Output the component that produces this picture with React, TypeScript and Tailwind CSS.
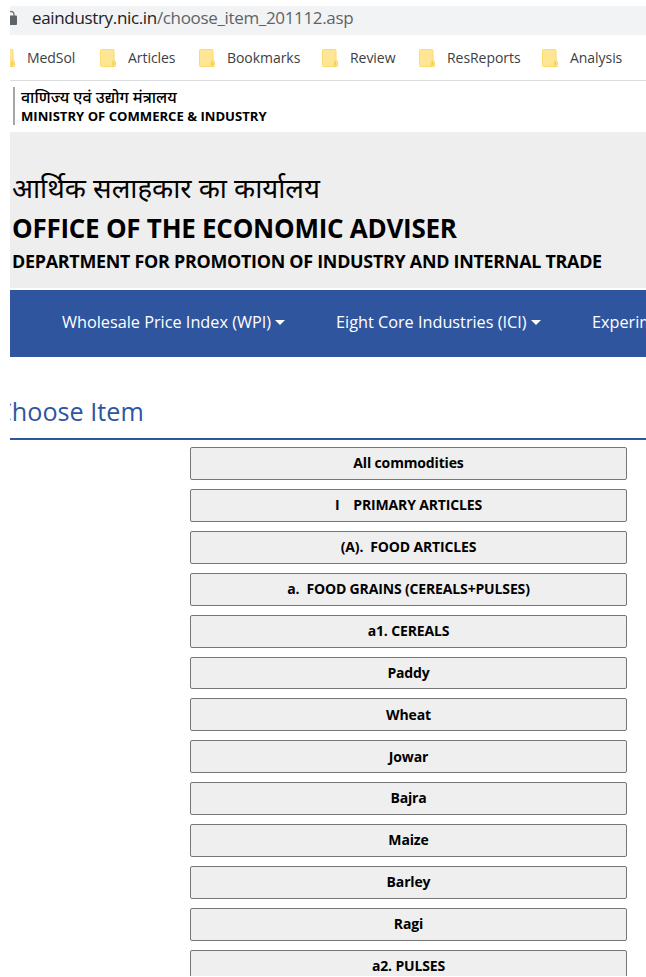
import type { ReactNode } from "react";

const bookmarks = [
  { label: "MedSol", width: "w-[101px]" },
  { label: "Articles", width: "w-[99px]" },
  { label: "Bookmarks", width: "w-[123px]" },
  { label: "Review", width: "w-[97px]" },
  { label: "ResReports", width: "w-[123px]" },
  { label: "Analysis", width: "w-[100px]" },
];

const items = [
  "All commodities",
  "I    PRIMARY ARTICLES",
  "(A).  FOOD ARTICLES",
  "a.  FOOD GRAINS (CEREALS+PULSES)",
  "a1. CEREALS",
  "Paddy",
  "Wheat",
  "Jowar",
  "Bajra",
  "Maize",
  "Barley",
  "Ragi",
  "a2. PULSES",
];

function LockIcon() {
  return (
    <svg className="h-4 w-3 shrink-0" viewBox="0 0 12 16">
      <path d="M3 6V4.5a3 3 0 0 1 6 0V6" fill="none" stroke="#77797d" strokeWidth="1.3" />
      <rect x="0" y="5.5" width="12" height="9.5" rx="1" fill="#5f6368" />
    </svg>
  );
}

function FolderIcon() {
  return (
    <svg className="h-[18px] w-4 shrink-0" viewBox="0 0 16 18">
      <rect x="0.5" y="0.5" width="13.5" height="17" rx="1" fill="#ffe694" stroke="#fbdb6b" />
      <path d="M12.2 17.5v-4.2a1.6 1.6 0 0 1 3.2 0v3.2q0 1-1 1z" fill="#ffe694" stroke="#f8d355" />
      <path d="M13.5 13v3" stroke="#f0c850" />
    </svg>
  );
}

function NavLink({ children, className }: { children: ReactNode; className: string }) {
  return (
    <a className={`flex shrink-0 items-center whitespace-nowrap ${className}`}>
      {children}
      <span className="ml-1 border-x-[5px] border-t-[5px] border-x-transparent border-t-white" />
    </a>
  );
}

export default function App() {
  return (
    <div className="h-[977px] overflow-hidden bg-white pt-[6px] pl-[10px] font-['Open_Sans','Noto_Sans',sans-serif] text-black">
      <div className="h-[970px] overflow-hidden">
        <div className="flex h-[29px] items-center bg-[#f1f3f4] pb-[5px]">
          <div className="-ml-[5px] flex items-center">
            <LockIcon />
            <p className="ml-[15px] text-[17px] leading-6 tracking-[-0.34px] whitespace-nowrap text-[#5f6368]">
              <span className="text-[#202124]">eaindustry.nic.in</span>/choose_item_201112.asp
            </p>
          </div>
        </div>

        <div className="h-[46px] border-b border-[#dadce0]">
          <div className="-ml-[11px] flex h-[45px] items-center">
            {bookmarks.map((bookmark) => (
              <div key={bookmark.label} className={`flex shrink-0 items-center gap-3 ${bookmark.width}`}>
                <FolderIcon />
                <span className="pb-px text-[14px] tracking-[-0.05px] whitespace-nowrap text-[#3c4043]">
                  {bookmark.label}
                </span>
              </div>
            ))}
          </div>
        </div>

        <header>
          <div className="h-[51px] pt-[6px] pl-[3px]">
            <div className="h-[38px] border-l-2 border-[#a6a6a6] pl-[6px] whitespace-nowrap">
              <p className="text-[16px] leading-[21px] font-medium">वाणिज्य एवं उद्योग मंत्रालय</p>
              <p className="text-[13.1px] leading-4 font-bold">MINISTRY OF COMMERCE &amp; INDUSTRY</p>
            </div>
          </div>
          <div className="h-[156px] bg-[#eeeeee] pt-[36px] pl-[2px] whitespace-nowrap">
            <p className="text-[27.5px] leading-10">आर्थिक सलाहकार का कार्यालय</p>
            <h1 className="text-[26px] leading-10 font-bold tracking-[-0.26px]">OFFICE OF THE ECONOMIC ADVISER</h1>
            <h2 className="text-[17.9px] leading-[26px] font-bold tracking-[-0.27px]">
              DEPARTMENT FOR PROMOTION OF INDUSTRY AND INTERNAL TRADE
            </h2>
          </div>
        </header>

        <nav className="mt-[2px] flex h-[67px] items-center overflow-hidden bg-[#30559f] pb-[3px] text-[16.25px] text-white">
          <NavLink className="ml-[52px] w-[274px]">Wholesale Price Index (WPI)</NavLink>
          <NavLink className="w-[256px]">Eight Core Industries (ICI)</NavLink>
          <NavLink className="w-[200px]">Experimental</NavLink>
        </nav>

        <main>
          <div className="h-[83px] border-b-2 border-[#30559f] pt-[36px]">
            <h3 className="-ml-[14px] text-[25.2px] leading-9 text-[#30559f]">Choose Item</h3>
          </div>
          <div className="mt-[7.1px] ml-[180px] w-[437px]">
            {items.map((item) => (
              <button
                key={item}
                className="mb-[9px] block h-[32.9px] w-full rounded-[2px] border border-[#767676] bg-[#efefef] pb-[0.5px] text-center text-[14px] leading-5 font-bold tracking-[-0.15px] whitespace-pre"
              >
                {item}
              </button>
            ))}
          </div>
        </main>
      </div>
    </div>
  );
}
